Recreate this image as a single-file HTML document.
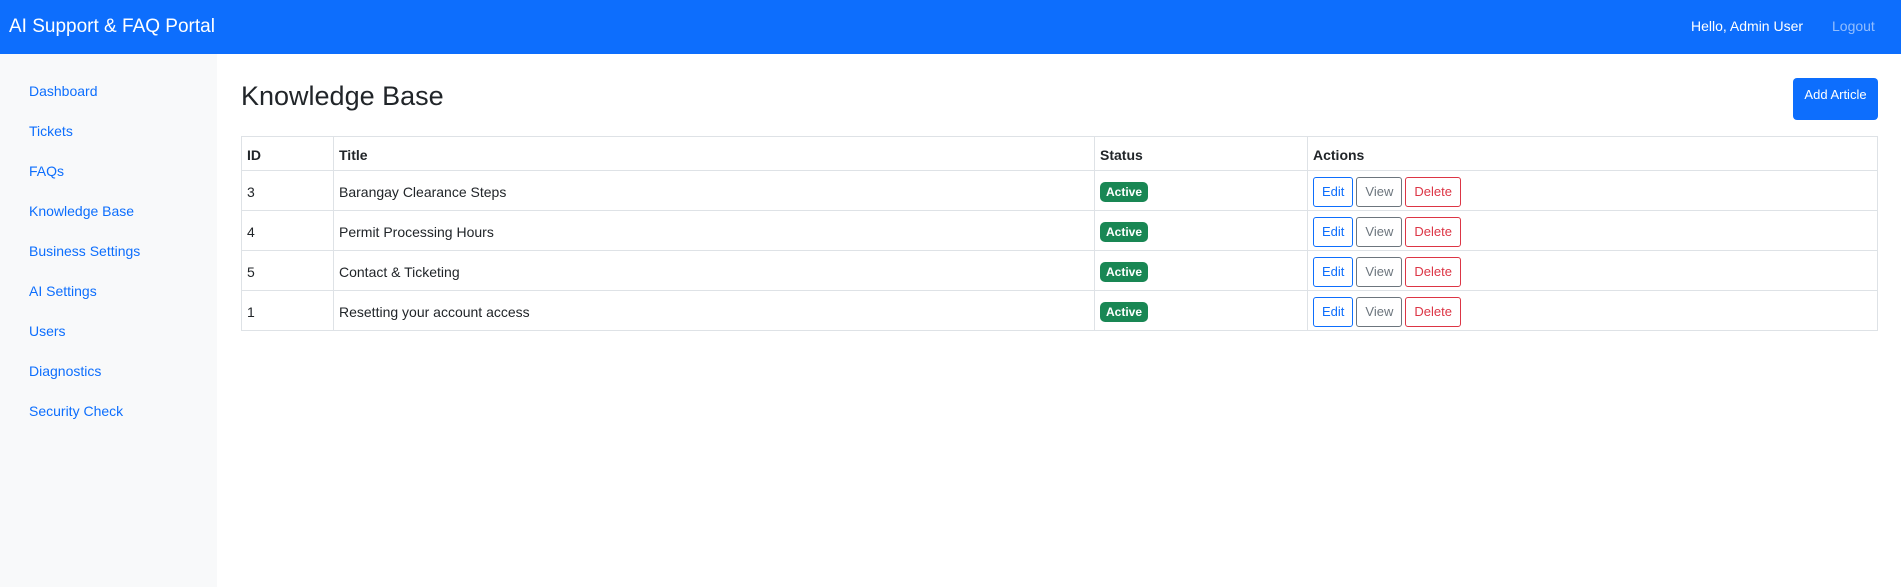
<!DOCTYPE html>
<html><head><meta charset="utf-8"><style>
*{box-sizing:border-box;margin:0;padding:0}
body{width:1901px;height:587px;overflow:hidden;font-family:"Liberation Sans",sans-serif;background:#fff;color:#212529}
.nav{height:54px;background:#0d6efd;color:#fff;position:relative}
.brand{position:absolute;left:9px;top:16px;font-size:19px}
.hello{position:absolute;left:1691px;top:18px;font-size:14px}
.logout{position:absolute;left:1832px;top:18px;font-size:14px;color:rgba(255,255,255,.55)}
.side{position:absolute;left:0;top:54px;width:217px;height:533px;background:#f8f9fa}
.side a{position:absolute;left:29px;font-size:14px;color:#0d6efd;text-decoration:none}
h1{position:absolute;left:241px;top:81px;font-size:27px;font-weight:500}
.add{position:absolute;left:1793px;top:78px;width:85px;height:42px;background:#0d6efd;color:#fff;border-radius:4px;font-size:13px;text-align:center;padding-top:9px}
table{position:absolute;left:241px;top:136px;width:1637px;border-collapse:collapse;font-size:14px}
td,th{border:1px solid #dee2e6;padding:2px 5px 0;text-align:left;height:40px}
th{height:34px;font-weight:bold}
.badge{display:inline-block;background:#198754;color:#fff;font-size:12px;font-weight:bold;padding:3px 6px;border-radius:5px}
.b{display:inline-block;height:30px;border:1px solid;border-radius:3px;font-size:13px;padding:6px 8px;margin-right:3px;vertical-align:middle}
</style></head><body>
<div class="nav"><div class="brand">AI Support &amp; FAQ Portal</div><div class="hello">Hello, Admin User</div><div class="logout">Logout</div></div>
<div class="side">
<a style="top:29px">Dashboard</a><a style="top:69px">Tickets</a><a style="top:109px">FAQs</a><a style="top:149px">Knowledge Base</a><a style="top:189px">Business Settings</a><a style="top:229px">AI Settings</a><a style="top:269px">Users</a><a style="top:309px">Diagnostics</a><a style="top:349px">Security Check</a>
</div>
<h1>Knowledge Base</h1>
<div class="add">Add Article</div>
<table>
<tr><th style="width:92px">ID</th><th style="width:761px">Title</th><th style="width:213px">Status</th><th>Actions</th></tr>
<tr><td>3</td><td>Barangay Clearance Steps</td><td><span class="badge">Active</span></td><td><span class="b" style="color:#0d6efd">Edit</span><span class="b" style="color:#6c757d">View</span><span class="b" style="color:#dc3545">Delete</span></td></tr>
<tr><td>4</td><td>Permit Processing Hours</td><td><span class="badge">Active</span></td><td><span class="b" style="color:#0d6efd">Edit</span><span class="b" style="color:#6c757d">View</span><span class="b" style="color:#dc3545">Delete</span></td></tr>
<tr><td>5</td><td>Contact &amp; Ticketing</td><td><span class="badge">Active</span></td><td><span class="b" style="color:#0d6efd">Edit</span><span class="b" style="color:#6c757d">View</span><span class="b" style="color:#dc3545">Delete</span></td></tr>
<tr><td>1</td><td>Resetting your account access</td><td><span class="badge">Active</span></td><td><span class="b" style="color:#0d6efd">Edit</span><span class="b" style="color:#6c757d">View</span><span class="b" style="color:#dc3545">Delete</span></td></tr>
</table>
</body></html>
